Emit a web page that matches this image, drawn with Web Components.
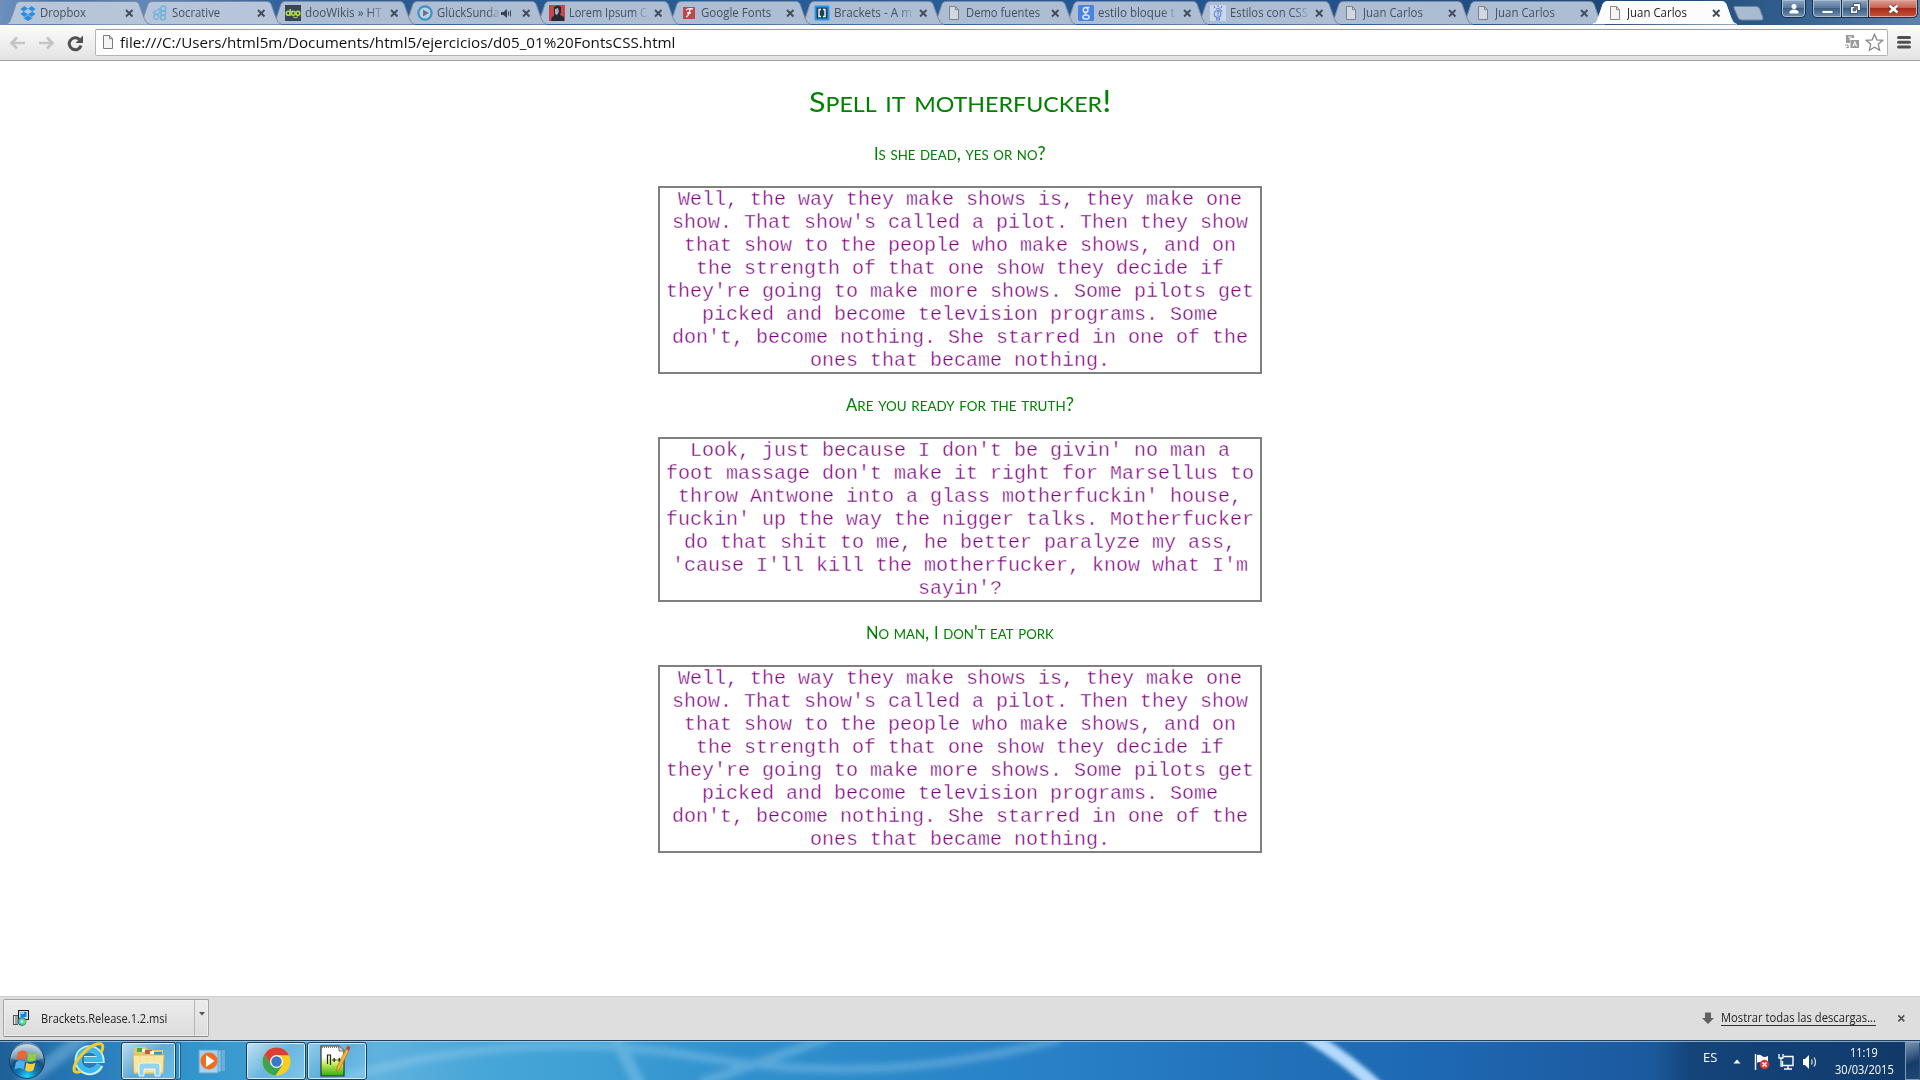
<!DOCTYPE html>
<html lang="es">
<head>
<meta charset="utf-8">
<title>Juan Carlos</title>
<style>
html,body{margin:0;height:100%;overflow:hidden;background:#fff}
body{font-family:"Open Sans","Noto Sans",sans-serif;font-size:12px}
</style>
</head>
<body>
<desktop-screen></desktop-screen>
<script>
const define = (name, css, html, init) => {
  const t = document.createElement('template');
  t.innerHTML = `<style>*{box-sizing:border-box}${css}</style>${html}`;
  customElements.define(name, class extends HTMLElement {
    constructor() {
      super();
      this.attachShadow({ mode: 'open' });
    }
    connectedCallback() {
      if (this.ready) return;
      this.ready = true;
      this.shadowRoot.append(t.content.cloneNode(true));
      if (init) init(this, this.shadowRoot);
    }
  });
};

// Text whose line is stretched or condensed to the width given in pixels.
define('fit-text',
  `:host{display:inline-block;white-space:nowrap;text-align:left;flex:none}
   span{display:inline-block;transform-origin:0 50%}`,
  `<span><slot></slot></span>`,
  (el, root) => {
    const s = root.querySelector('span');
    const w = +el.getAttribute('w');
    el.style.width = w + 'px';
    s.style.transform = `scaleX(${w / s.offsetWidth})`;
  });

const doc = `<path d="M3.5 1.5h6l3 3.2v9.8h-9z" fill="#eee" fill-opacity=".6" stroke="#7c7c7c"/><path d="M9.5 1.5v3.2h3" fill="none" stroke="#7c7c7c"/>`;
const icons = {
  doc,
  dropbox: `<g fill="#1f86e5"><path d="M4.5 1 8 3.7 3.7 6.5.4 3.9zM11.500 1l4.100 2.900-3.300 2.600L8 3.700zM.4 9.100l3.300-2.600L8 9.300l-3.500 2.800zM15.600 9.100l-3.300-2.600L8 9.300l3.500 2.800zM8 9.900l3.500 2.900 1-.6v1L8 15.900l-4.500-2.700v-1l1 .6z"/></g>`,
  socrative: `<g fill="none" stroke="#6aaedb" stroke-width="1.300"><path d="M4.500 5.500 8 3.500v4l-3.500 2-3.300-2z"/><circle cx="11.300" cy="3.500" r="2.500"/><circle cx="11.300" cy="8" r="2.400"/><circle cx="11" cy="12.600" r="2.400"/><circle cx="4.300" cy="11.800" r="2.500"/></g>`,
  doo: `<path fill="#2c3947" d="M0 0h16v16H0z"/><g fill="none" stroke="#b4d94c" stroke-width="1.600"><circle cx="3.300" cy="8.300" r="2"/><path d="M5.300 4v6.500"/><circle cx="8.300" cy="8.300" r="1.900"/><circle cx="12.900" cy="8.300" r="1.900"/><path d="M8 12q3 1.500 5-.3" stroke-width="1"/></g>`,
  play: `<circle cx="8" cy="8" r="6.600" fill="#c5d3e1" stroke="#2992c6" stroke-width="2.200"/><path d="m6 4.500 6 3.500-6 3.500z" fill="#5b7183"/>`,
  lorem: `<path fill="#c83a40" d="M0 0h16v16H0z"/><path d="M5 2q4-3 7 0v5l-1 3 4 2v4H2l1-4 2-1z" fill="#191b22"/><path d="m6 4 3-1 1 4-2 3-2-1z" fill="#aaa9b2"/>`,
  gfonts: `<path fill="#c5383f" d="M2 2h12v12H2z"/><path d="M5 5q2-2 7-1M9 4q-1 7-4 8M6 8h4" fill="none" stroke="#fff" stroke-width="1.300"/>`,
  brackets: `<rect x=".6" y=".6" width="14.800" height="14.800" rx="1" fill="#1294ee"/><path fill="#12344f" d="M2.500 2.500h11v11h-11z"/><path d="M7 4.500H5v7h2M9 4.500h2v7H9" fill="none" stroke="#fff" stroke-width="1.400"/>`,
  google: `<rect width="16" height="16" rx="1.500" fill="#3f7de4"/><g fill="none" stroke="#dfeafc" stroke-width="1.500"><ellipse cx="7.600" cy="4.900" rx="2.300" ry="2.400"/><ellipse cx="8" cy="12" rx="3.100" ry="2.100"/><path d="M8 2.500h3.500M8 7.300q-2 1 .5 2.200"/></g>`,
  css: `<path fill="#cfdbee" d="M0 0h16v16H0z"/><g fill="none" stroke="#5c84cf" stroke-width="1.100"><circle cx="7.500" cy="9" r="3.300"/><path d="M8 5v6M8 6q3-3 4 1M6 4l4-1M8 0v2M4 1l1 2M12 1l-1 2M6.500 13h3v2h-3z"/></g>`
};

define('site-icon', `:host{display:block;width:16px;height:16px;flex:none}svg{display:block}`,
  `<svg width="16" height="16" viewBox="0 0 16 16"></svg>`,
  (el, root) => { root.querySelector('svg').innerHTML = icons[el.getAttribute('name')]; });

define('browser-tab',
  `:host{display:flex;position:relative;flex:none;width:132.25px;height:24px;color:#45505e}
   .shape{position:absolute;left:0;top:0}
   .row{position:relative;display:flex;align-items:center;width:132.25px;height:24px;padding:2px 0 0 14px}
   .t{flex:none;width:78px;margin-left:4px;overflow:hidden;line-height:20px;height:20px}
   .fade{-webkit-mask-image:linear-gradient(90deg,#000 82%,rgba(0,0,0,.15) 100%)}
   .x{position:absolute;left:119px;top:9px}
   .snd{position:absolute;left:98px;top:8px;display:none}
   :host([audio]) .snd{display:block}
   :host([audio]) .t{width:62px}
   site-icon{opacity:.9}
   :host([active]){color:#222}`,
  `<svg class="shape" width="146" height="25" viewBox="0 0 146 25"><path d="M0 24C4 23 4 21 6 16L10 4Q11 1.500 14 1.500H129Q132 1.500 133 4L138 18Q140 24 144 24.500" stroke="#7d8ca2"/></svg>
   <div class="row"><div class="t"></div></div>
   <svg class="snd" width="12" height="11"><path d="M0 4h2.500L6 1v9L2.500 7H0z" fill="#39434f"/><path d="M7.500 3.500v4M9.500 2.500v6" stroke="#39434f"/></svg>
   <svg class="x" width="9" height="9"><path d="m1 1 6.500 6.500M7.500 1 1 7.500" stroke="#424c58" stroke-width="1.900"/></svg>`,
  (el, root) => {
    const a = el.hasAttribute('active'), g = n => el.getAttribute(n);
    root.querySelector('path').setAttribute('fill', a ? '#fcfcfc' : g('fill') || '#adbed4');
    if (a) root.querySelector('path').setAttribute('stroke', '#fcfcfc');
    const ic = document.createElement('site-icon');
    ic.setAttribute('name', g('icon'));
    root.querySelector('.row').prepend(ic);
    const f = document.createElement('fit-text');
    f.textContent = g('label'); f.setAttribute('w', g('w'));
    root.querySelector('.t').append(f);
    if (el.hasAttribute('fade')) root.querySelector('.t').classList.add('fade');
  });

define('tab-strip',
  `:host{display:flex;height:25px;flex:none;padding-left:6px;position:relative;
     background:linear-gradient(90deg,#6e91be 0,#4470a7 60px,#6189b8 150px,#34639d 270px,#27598f 450px,#275d98 900px,#225089 1400px,#1c4675 1650px,#315d8c 1780px,#5c82ab 1920px)}
   .new{margin:6px 0 0 8px;flex:none}
   .ctl{display:flex;margin-left:auto;margin-right:2px;align-items:flex-start}
   .b{display:flex;align-items:center;justify-content:center;height:18px;border:1px solid #17304d;border-top:0;box-shadow:inset 0 0 0 1px #a9bdd3;background:linear-gradient(#8ea6c2,#5a7898 45%,#3d5f84 50%,#6f8fb0)}
   .u{width:25px;border-radius:0 0 5px 5px;margin-right:6px}
   .m{width:30px;border-radius:0 0 0 5px}.r{width:27px;border-left:0}
   .c{width:49px;border-radius:0 0 5px 0;border-left:0;background:linear-gradient(#dba195,#c46354 45%,#a92c1a 50%,#c75339);box-shadow:inset 0 0 0 1px #e0aaa0}`,
  `<browser-tab icon="dropbox" label="Dropbox" w="46" fill="#b7c5d8"></browser-tab><browser-tab icon="socrative" label="Socrative" w="48" fill="#b6c5da"></browser-tab><browser-tab icon="doo" label="dooWikis » HT" w="77" fade></browser-tab><browser-tab icon="play" label="GlückSunda" w="62" fade audio></browser-tab><browser-tab icon="lorem" label="Lorem Ipsum C" w="78" fade></browser-tab><browser-tab icon="gfonts" label="Google Fonts" w="70"></browser-tab><browser-tab icon="brackets" label="Brackets - A m" w="78" fade></browser-tab><browser-tab icon="doc" label="Demo fuentes" w="74"></browser-tab><browser-tab icon="google" label="estilo bloque t" w="77" fade></browser-tab><browser-tab icon="css" label="Estilos con CSS" w="78" fade></browser-tab><browser-tab icon="doc" label="Juan Carlos" w="60"></browser-tab><browser-tab icon="doc" label="Juan Carlos" w="60"></browser-tab><browser-tab icon="doc" label="Juan Carlos" w="60" active></browser-tab>
   <svg class="new" width="32" height="15"><path d="M1.500.5H23q3 0 4 3l3 8.500q.5 2-1.500 2H9q-3 0-4-2.500L.8 1.500z" fill="#a9bbd0" stroke="#7187a2"/></svg>
   <div class="ctl">
     <div class="b u"><svg width="12" height="12"><circle cx="6" cy="3.500" r="2.500" fill="#fff"/><path d="M1.500 10.500V8.500Q3 6.500 6 6.500t4.500 2v2z" fill="#fff"/></svg></div>
     <div class="b m"><svg width="13" height="12"><path d="M1 7.500h11v3H1z" fill="#fff" stroke="#43566e" stroke-width=".7"/></svg></div>
     <div class="b r"><svg width="13" height="13"><path d="M4.500 1.500h7v7h-3v3h-7v-7h3z" fill="#fff" stroke="#43566e"/><path d="M4 4.500h4.500V9M4 6.500h2.500V9H4z" fill="#6c83a0" stroke="#43566e" stroke-width=".8"/></svg></div>
     <div class="b c"><svg width="13" height="12"><path d="m2.500 2.500 8 7M10.500 2.500l-8 7" stroke="#563438" stroke-width="4"/><path d="m2.500 2.500 8 7M10.500 2.500l-8 7" stroke="#fff" stroke-width="2.600"/></svg></div>
   </div>`,
  (el, root) => root.querySelectorAll('browser-tab').forEach((t, i) => { t.style.zIndex = i === 12 ? 30 : 20 - i; }));

define('nav-bar',
  `:host{display:flex;align-items:center;height:36px;flex:none;background:linear-gradient(#fcfcfc,#e3e3e3);border-bottom:1px solid #a3a3a3;padding:0 7px 0 9px;position:relative}
   .box{display:flex;align-items:center;width:1793px;height:27px;margin:-1px 0 0 10px;background:#fff;border:1px solid #b4b4b4;border-top-color:#9c9c9c;border-radius:2px;padding:0 3px 0 4px;font-size:15px;color:#111}
   .box fit-text{margin-left:3.500px;line-height:24px}
   .star{margin-left:5px}.tr{margin-left:auto}
   .menu{margin-left:9px}`,
  `<svg width="76" height="18" viewBox="0 0 76 18"><g fill="none" stroke="#c5c5c5" stroke-width="2.600"><path d="M16 9H3M8 3.500 2.500 9 8 14.500M30 9h13M38 3.500 43.500 9 38 14.500"/></g><path d="M70.500 5.500A6 6 0 1 0 72 11.500" fill="none" stroke="#505050" stroke-width="3"/><path d="M74 1.500V9h-7.500z" fill="#505050"/></svg>
   <div class="box"><site-icon name="doc"></site-icon><fit-text w="555">file:///C:/Users/html5m/Documents/html5/ejercicios/d05_01%20FontsCSS.html</fit-text>
   <svg class="tr" width="16" height="16"><path fill="#999" d="M2 1h8v3H6v5H2zM6.500 6H15v8H6.500z"/><path d="M4 3h4M6 3v3" stroke="#eee"/><path d="m8.800 12.500 2-5 2 5M9.500 11h2.700" stroke="#fff" fill="none"/><path d="M1 11h3v3M2 14l3-1" stroke="#999" fill="none"/></svg>
   <svg class="star" width="19" height="19" viewBox="0 0 19 19"><path d="m9.500 1.300 2.300 5.500 6 .5-4.500 4 1.300 5.900-5.100-3-5.100 3 1.300-5.900-4.500-4 6-.5z" fill="#fff" stroke="#888" stroke-width="1.300"/></svg></div>
   <svg class="menu" width="14" height="15"><path d="M1.500 2.500h11M1.500 7.300h11M1.500 12.100h11" stroke="#505050" stroke-width="3" stroke-linecap="round"/></svg>`);

define('caps-title',
  `:host{display:block;text-align:center;color:green;font-family:Lato,sans-serif;font-variant-caps:small-caps;font-size:19.300px;line-height:24px;height:24px}
   :host([big]){font-size:30.500px;line-height:38px;height:38px}`,
  `<slot></slot>`);

// The thin white outline slims the strokes of the typewriter face.
define('quote-box',
  `:host{display:block;width:604px;margin:0 auto;border:2px solid gray;color:purple;text-align:center;font:20px/23px "Liberation Mono",monospace;-webkit-text-stroke:.4px #fff}`,
  `<slot></slot>`);

define('page-view',
  `:host{display:block;flex:1;background:#fff;padding-top:20px}
   b{font-weight:400;font-size:.9em}
   caps-title{margin:18px 0 21px}
   caps-title[big]{margin:0}
   .first{margin:22px 0 21px}`,
  `<caps-title big><fit-text w="302"><b>S</b>pell it motherfucker!</fit-text></caps-title>
   <caps-title class="first"><fit-text w="172"><b>I</b>s she dead, yes or no?</fit-text></caps-title>
   <quote-box>Well, the way they make shows is, they make one show. That show's called a pilot. Then they show that show to the people who make shows, and on the strength of that one show they decide if they're going to make more shows. Some pilots get picked and become television programs. Some don't, become nothing. She starred in one of the ones that became nothing.</quote-box>
   <caps-title><fit-text w="228"><b>A</b>re you ready for the truth?</fit-text></caps-title>
   <quote-box>Look, just because I don't be givin' no man a foot massage don't make it right for Marsellus to throw Antwone into a glass motherfuckin' house, fuckin' up the way the nigger talks. Motherfucker do that shit to me, he better paralyze my ass, 'cause I'll kill the motherfucker, know what I'm sayin'?</quote-box>
   <caps-title><fit-text w="188"><b>N</b>o man, <b>I</b> don't eat pork</fit-text></caps-title>
   <quote-box>Well, the way they make shows is, they make one show. That show's called a pilot. Then they show that show to the people who make shows, and on the strength of that one show they decide if they're going to make more shows. Some pilots get picked and become television programs. Some don't, become nothing. She starred in one of the ones that became nothing.</quote-box>`);

define('download-shelf',
  `:host{display:flex;height:44px;flex:none;background:#dedede;border-top:1px solid #cfcfcf;padding:2px 14px 0 3px;color:#222}
   .item{display:flex;width:206px;height:38px;border:1px solid #a5a5a5;border-bottom-color:#888;border-radius:2px;background:linear-gradient(#ececec,#dcdcdc);box-shadow:inset 0 0 0 1px #f0f0f0}
   .main{display:flex;align-items:center;width:191px;padding-left:9px;border-right:1px solid #b5b5b5}
   .main fit-text{margin-left:12px}
   .arr{margin:12px 0 0 4px}
   .right{display:flex;align-items:center;margin-left:auto;height:38px}
   .right fit-text{margin-left:7px;line-height:15px;height:16px;border-bottom:1px solid #333}
   .x{margin-left:21px}`,
  `<div class="item"><div class="main"><svg width="16" height="17"><path fill="#1c1c1c" d="M5 0h11v10H5z"/><path fill="#d8d8d8" d="M6 1h9v8H6z"/><path fill="#1583e8" d="M7.500 2h6v5h-6z"/><path fill="#7fd6ff" d="M8 2h3v2H8z"/><path fill="#555" d="M0 5h5v10H0z"/><path fill="#eee" d="M1.500 6v8M1 6h1.500v8H1zM3.500 6h1v8h-1z"/><circle cx="9" cy="11.500" r="4" fill="#36d6d2" stroke="#333" stroke-width=".7"/><path d="m9 11.500 3.500-2a4 4 0 0 1-2 5.500z" fill="#69e04a"/><circle cx="9" cy="11.500" r="1.200" fill="#fff"/></svg><fit-text w="126">Brackets.Release.1.2.msi</fit-text></div><svg class="arr" width="6" height="4"><path d="M0 0h6L3 3.500z" fill="#555"/></svg></div>
   <div class="right"><svg width="12" height="13"><path d="M3 .5h6V6h3l-6 6-6-6h3z" fill="#616161"/></svg><fit-text w="155">Mostrar todas las descargas...</fit-text><svg class="x" width="9" height="9"><path d="m1.300 1.300 6 6M7.300 1.300l-6 6" stroke="#555" stroke-width="1.700"/></svg></div>`);

define('task-bar',
  `:host{display:flex;height:40px;flex:none;position:relative;border-top:1px solid #24425f;overflow:hidden;color:#fff;
     background:linear-gradient(90deg,#1e5f98 0,#2371ae 50px,#2b80bd 110px,#3296cc 200px,#48a3d6 300px,#5fb2de 380px,#48a6d8 480px,#3d9fd4 600px,#3090cd 740px,#2b88c9 900px,#2880c6 1060px,#2273b9 1250px,#1e68b3 1430px,#1c5aa0 1640px,#1b599c 1655px,#14447a 1690px,#123d70 1850px,#123764 1920px)}
   .glow{position:absolute;left:0;top:0}
   .row{position:relative;display:flex;width:100%;height:39px;border-top:1px solid rgba(190,225,250,.65)}
   .orb{margin:0 0 0 8px}.ie{margin:0 0 0 26px}
   .btn{display:flex;align-items:center;justify-content:center;height:38px;border:1px solid #1c3d5a;border-radius:3px;box-shadow:inset 0 0 0 1px #d4edfb;background:linear-gradient(135deg,rgba(240,250,255,.75),rgba(150,210,240,.45) 50%,rgba(170,225,250,.55))}
   .ex{width:55px;margin-left:15px}
   .stk{width:5px;height:38px;border:1px solid #28587f;border-left:0;border-radius:0 3px 3px 0;box-shadow:inset -1px 0 #b5dcf0}
   .wmp{margin:6px 0 0 17px}.ch{width:60px;margin-left:17px}
   .np{width:60px;margin-left:1px;background:linear-gradient(135deg,rgba(210,236,250,.55),rgba(120,195,232,.25) 50%,rgba(150,215,245,.4))}
   .np svg{margin-right:5px}
   .tray{display:flex;margin-left:auto}
   .tray>svg{margin-top:8px}
   .es{margin:7px 16px 0 0;line-height:17px}
   .clock{display:flex;flex-direction:column;align-items:center;width:60px;margin:2px 11px 0 16px;line-height:17px}
   .desk{width:15px;height:38px;border:1px solid #7d9cbc;border-right-color:#2c4f78;background:linear-gradient(160deg,#7890ac,#3b5d85 35%,#163c69 55%,#1f4878)}`,
  `<svg class="glow" width="1920" height="40"><defs><filter id="b"><feGaussianBlur stdDeviation="3"/></filter><filter id="c" x="-20%" width="140%"><feGaussianBlur stdDeviation="2.200"/></filter></defs>
     <g fill="none" filter="url(#b)" stroke="#a9d8f4" opacity=".35"><path d="M340 38Q520-15 700 16T1060-2" stroke-width="8"/><path d="M615-5 640 45" stroke-width="12"/><path d="M700 42Q780 15 830-4" stroke-width="9"/><path d="M20 45 85-5" stroke-width="14"/></g>
     <path d="M1307-6Q1348 18 1379 48" fill="none" stroke="#b3dafc" stroke-width="13" filter="url(#c)"/></svg>
   <div class="row">
     <svg class="orb" width="38" height="38" viewBox="0 0 38 38"><defs><radialGradient id="o" cx=".5" cy=".95" r=".9"><stop stop-color="#20d8ff"/><stop offset=".3" stop-color="#1479b4"/><stop offset=".6" stop-color="#144f80"/><stop offset="1" stop-color="#a9c5d6"/></radialGradient></defs><circle cx="19" cy="19" r="17.500" fill="url(#o)" stroke="#17405f"/><path d="M3 16A16 16 0 0 1 35 16Q19 24 3 16" fill="#fff" opacity=".3"/><g transform="translate(0 1)"><path d="M10 9q4.500-3 9 0l-1.500 8q-4-3-9 0z" fill="#ee6434"/><path d="M20.500 9.500q4 3 9-.5l-2 8q-4 3-8.500 0z" fill="#8fcb43"/><path d="M8 19q4-3 9 0l-1.500 7.500q-4-3-9 0z" fill="#4eb0ed"/><path d="M18.500 19.500q4 3 9 0l-2 7.500q-4 3-8.500 0z" fill="#fcce3b"/></g></svg>
     <svg class="ie" width="34" height="34" viewBox="0 0 34 34"><path d="M28 23A11.500 11.500 0 1 1 29 17.500H12" fill="none" stroke="#c4efff" stroke-width="7"/><path d="M27 22.500A10.500 10.500 0 1 1 28 17.500H12" fill="none" stroke="#3cb8f0" stroke-width="5.200"/><path d="M29 11Q34 0 25 2C14 5 2 20 2 27q0 5 7 2" fill="none" stroke="#f7cb2c" stroke-width="3"/></svg>
     <div class="btn ex"><svg width="34" height="32" viewBox="0 0 34 32"><path d="M2 4q0-2 2-2h9l3 3h15v24H2z" fill="#e8c970"/><path d="M5 3h5v4H5z" fill="#42ad50"/><path d="M13 5h7v4h-7z" fill="#d8523c"/><path d="M22 7h8v4h-8z" fill="#3c91d0"/><path d="M10 4h3v3h-3zM18 6h4v3h-4z" fill="#fff"/><path d="M1 10h31l-1 18H2z" fill="#f8e7a3" stroke="#dcb957"/><path d="M8 10v18M15 10v18M22 10v18" stroke="#efd98a"/><path d="M7 31V21q0-3 3-3h15q3 0 3 3v10h-5v-7H12v7z" fill="#93d3ee" stroke="#e6f8ff"/></svg></div><div class="stk"></div>
     <svg class="wmp" width="31" height="28" viewBox="0 0 31 28"><path d="M8 2h19v21H8z" fill="#68aeda"/><path d="M4 2h19v22H4z" fill="#8ac4e6" stroke="#3f8cc0" stroke-width=".7"/><path d="M1 2h19v23H1z" fill="#a7d2ec" stroke="#69a5cb"/><circle cx="11" cy="13" r="8.500" fill="#f36b1c"/><path d="m8 7 8.500 6L8 19z" fill="#fff"/></svg>
     <div class="btn ch"><svg width="29" height="29" viewBox="-14.500 -14.500 29 29"><circle r="14" fill="#f8ce20"/><path d="M-12.100-7A14 14 0 0 0-1 14L6 3.500 0 6-5.500 3z" fill="#3ba451"/><path d="M-12.100-7-5.500 3 0-6.300h12.500A14 14 0 0 0-12.100-7" fill="#dc3f35"/><circle r="6.500" fill="#fff"/><circle r="5.200" fill="#3979c8"/></svg></div>
     <div class="btn np"><svg width="32" height="34" viewBox="0 0 32 34"><defs><linearGradient id="n" x2="0" y2="1"><stop offset=".35" stop-color="#fff"/><stop offset=".6" stop-color="#c7ec56"/><stop offset="1" stop-color="#35a817"/></linearGradient></defs><path d="M2 2h18l5 5v25H2z" fill="url(#n)" stroke="#333" stroke-width="1.200"/><path d="M3 3h17" stroke="#777" stroke-dasharray="1 1" stroke-width="2"/><path d="M20 2v5h5" fill="#ddd" stroke="#666"/><path d="M8.500 20v-9h3v10M13 16h4.500M15.200 14v4M18.500 16H22M20.300 14v4" fill="none" stroke="#222" stroke-width="1.200"/><path d="m27 5 3 1.500-9 18-3.500 3 .5-4.500z" fill="#f5b62c" stroke="#a9702a" stroke-width=".7"/><path d="m27 5 1.500-3.500 3 1.500L30 6.500z" fill="#c24146"/></svg></div>
     <div class="tray"><fit-text class="es" w="14">ES</fit-text>
       <svg width="8" height="24"><path d="M.5 13.500h7L4 9.500z" fill="#fff"/></svg>
       <svg style="margin-left:13px" width="16" height="24"><path d="M1.500 4v16" stroke="#fff" stroke-width="1.400"/><path d="M3 5q3-1 5 1t6 0v7q-3 2-6 0t-5 0z" fill="#fff"/><circle cx="10.500" cy="14.500" r="4.700" fill="#e3372c"/><path d="m8.500 12.500 4 4M12.500 12.500l-4 4" stroke="#fff" stroke-width="1.500"/></svg>
       <svg style="margin-left:8px" width="16" height="24"><path d="M5.500 6.500H15v9H4.500V11M10 15.500V19M6 19h8" fill="#17447a" stroke="#fff" stroke-width="1.400"/><path d="M1 4v4h4V4M3 8v8h2" fill="none" stroke="#fff" stroke-width="1.300"/></svg>
       <svg style="margin-left:8px" width="16" height="24"><path d="M1 9h2l4-4v14l-4-4H1z" fill="#fff"/><path d="M9.500 9.500q1.500 2.500 0 5M12 7.500q3 4.500 0 9" fill="none" stroke="#d9e5f2" stroke-width="1.200"/></svg>
       <div class="clock"><fit-text w="28">11:19</fit-text><fit-text w="59">30/03/2015</fit-text></div><div class="desk"></div></div>
   </div>`);

define('desktop-screen', `:host{display:flex;flex-direction:column;width:1920px;height:1080px;overflow:hidden}`,
  `<tab-strip></tab-strip><nav-bar></nav-bar><page-view></page-view><download-shelf></download-shelf><task-bar></task-bar>`);
</script>
</body>
</html>
